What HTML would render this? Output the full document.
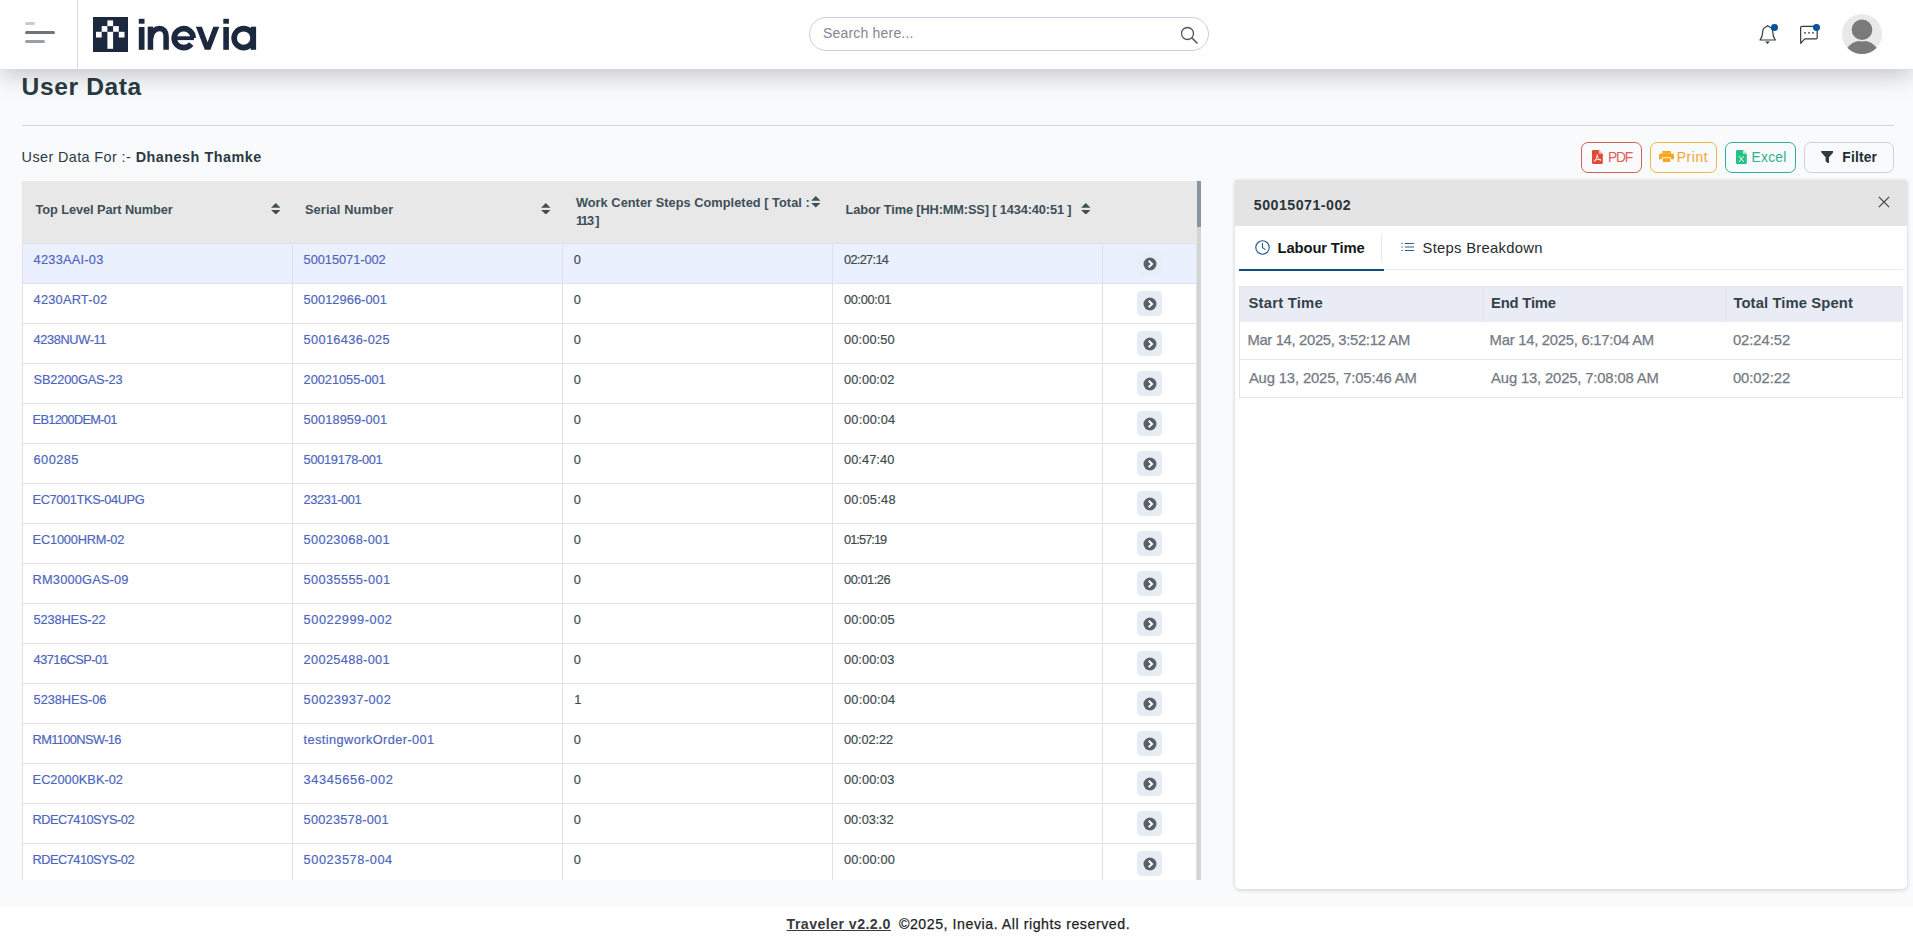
<!DOCTYPE html>
<html>
<head>
<meta charset="utf-8">
<title>User Data</title>
<style>
*{box-sizing:border-box;margin:0;padding:0}
html,body{width:1913px;height:940px;overflow:hidden}
body{font-family:"Liberation Sans",sans-serif;background:#f9fafc;position:relative;color:#3a474b}
.abs{position:absolute}
.t{position:absolute;white-space:nowrap;line-height:1}
#header{position:absolute;left:0;top:0;width:1913px;height:69px;background:#fff;box-shadow:0 6px 24px rgba(0,0,0,.22);z-index:5}
#hsep{position:absolute;left:77px;top:0;width:1px;height:69px;background:#d9d9d9}
.hb{position:absolute;left:25px;height:3px;border-radius:2px}
#search{position:absolute;left:809px;top:17px;width:400px;height:34px;border:1px solid #c9cee6;border-radius:17px;background:#fff}
#hr{position:absolute;left:22px;top:125px;width:1872px;height:1px;background:#cdd6ea}
.btn{position:absolute;top:142px;height:31px;border:1px solid;border-radius:7px;background:transparent}
#tbl{position:absolute;left:22px;top:181px;width:1175px;height:699px;background:#fff;overflow:hidden}
#thead{position:absolute;left:0;top:0;width:1175px;height:62px;background:#e8e8e8}
.row{position:absolute;left:0;width:1175px;height:40px;border-top:1px solid #dfe2ea;background:#fff}
.row.sel{background:#eaf0fe}
.vb{position:absolute;top:62px;width:1px;height:640px;background:#dfe2ea;z-index:2}
.act{position:absolute;left:1115px;top:7px;width:25px;height:25px;border-radius:4.500px;background:#e6ecf3}
.row.sel .act{background:#e8eef8}
#panel{position:absolute;left:1235px;top:180px;width:672px;height:708.500px;background:#fff;border-radius:0 0 5px 5px;box-shadow:0 1px 4px rgba(0,0,0,.18)}
#phead{position:absolute;left:0;top:0;width:672px;height:46px;background:#e4e4e4}
#itbl{position:absolute;left:4px;top:106px;width:664px;height:112px;border:1px solid #e3e6ee;background:#fff}
.ih{position:absolute;top:0;height:34.500px;background:#e9ecf4}
#footer{position:absolute;left:0;top:905.500px;width:1913px;height:35px;background:#fff}
</style>
</head>
<body>

<div id="header">
  <div class="hb" style="top:22px;width:10px;background:#cacbcc"></div>
  <div class="hb" style="top:31px;width:30px;background:#6c757d"></div>
  <div class="hb" style="top:40px;width:20px;background:#9a9fa6"></div>
  <div id="hsep"></div>
  <svg class="abs" style="left:93px;top:17px" width="35" height="35" viewBox="0 0 35 35">
    <rect width="35" height="35" fill="#1c2740"/>
    <g fill="#fff">
      <rect x="14.400" y="3.400" width="5.700" height="5.700"/>
      <rect x="8.700" y="9.100" width="5.700" height="5.700"/>
      <rect x="20.100" y="9.100" width="5.700" height="5.700"/>
      <rect x="3" y="14.800" width="5.700" height="5.700"/>
      <rect x="25.800" y="14.800" width="5.700" height="5.700"/>
      <rect x="14.400" y="14.800" width="5.700" height="17"/>
    </g>
  </svg>
  <svg class="abs" style="left:134px;top:14px" width="128" height="42" viewBox="0 0 128 42">
    <g fill="#1c2740">
      <rect x="4.800" y="13" width="5.700" height="22.800"/><rect x="4.800" y="4.800" width="5.700" height="4.900"/>
      <rect x="13.700" y="12.600" width="5.500" height="23.200"/>
      <polygon points="61.900,12.700 67.900,12.700 73.600,28.300 79.300,12.700 85.300,12.700 76.400,35.800 70.800,35.800"/>
      <rect x="89.300" y="13" width="5.600" height="22.800"/><rect x="89.300" y="4.800" width="5.600" height="4.900"/>
      <rect x="116.700" y="12.700" width="5.400" height="23.100"/>
    </g>
    <g fill="none" stroke="#1c2740">
      <path d="M32.100 35.800V22.300C32.100 17.300 29.300 14.600 25.600 14.600C21.600 14.600 17.500 17.600 16.500 24.500" stroke-width="5.500"/>
      <path d="M59.200 24.100A9.500 9.500 0 1 0 57.200 30" stroke-width="5.600"/>
      <path d="M41 24.200H60" stroke-width="3.800"/>
      <circle cx="109.600" cy="24.100" r="9.500" stroke-width="5.600"/>
    </g>
  </svg>

  <div id="search"></div>
  <div class="t" style="left:823px;top:26px;font-size:14px;letter-spacing:0.19px;color:#85858f;">Search here...</div>
  <svg class="abs" style="left:1180px;top:26px" width="18" height="18" viewBox="0 0 18 18" fill="none" stroke="#555" stroke-width="1.300">
    <circle cx="7.500" cy="7.500" r="6"/><path d="M12 12l5 5" stroke-width="1.600" stroke-linecap="round"/>
  </svg>

  <svg class="abs" style="left:1758px;top:24px" width="20" height="22" viewBox="0 0 20 22" fill="none" stroke="#2f3b3f" stroke-width="1.200">
    <path d="M9.500 1.700L8.200 2.800c-2.300.9-3.600 3-3.600 5.600 0 3.600-1.300 5.900-2.600 7.600h15.400c-1.300-1.700-2.600-4-2.600-7.600 0-2.600-1.300-4.700-3.600-5.600z" stroke-linejoin="round"/>
    <path d="M7.100 17.600h4.800l-2.400 2.300z" fill="#2f3b3f" stroke="none"/>
  </svg>
  <div class="abs" style="left:1771.100px;top:23.900px;width:6.900px;height:6.900px;border-radius:50%;background:#0a53a0"></div>
  <svg class="abs" style="left:1799px;top:25px" width="20" height="20" viewBox="0 0 20 20" fill="none" stroke="#2f3b3f" stroke-width="1.200">
    <path d="M1.600 2.800a1.500 1.500 0 0 1 1.500-1.500h13.600a1.500 1.500 0 0 1 1.500 1.500v9.600a1.500 1.500 0 0 1-1.500 1.500H5.700L1.700 18.300z" stroke-linejoin="round"/>
    <circle cx="6" cy="7.800" r=".9" fill="#2f3b3f" stroke="none"/><circle cx="10" cy="7.800" r=".9" fill="#2f3b3f" stroke="none"/><circle cx="14" cy="7.800" r=".9" fill="#2f3b3f" stroke="none"/>
  </svg>
  <div class="abs" style="left:1813.100px;top:23.900px;width:6.900px;height:6.900px;border-radius:50%;background:#0a53a0"></div>
  <svg class="abs" style="left:1842px;top:14px" width="40" height="40" viewBox="0 0 40 40">
    <defs><clipPath id="av"><circle cx="20" cy="20" r="20"/></clipPath></defs>
    <circle cx="20" cy="20" r="20" fill="#e9e9e9"/>
    <g clip-path="url(#av)" fill="#7a7a7a">
      <ellipse cx="20" cy="41" rx="17" ry="14.200"/>
      <circle cx="20" cy="15.800" r="11.700" fill="#e9e9e9"/>
      <circle cx="20" cy="15.800" r="10.300"/>
    </g>
  </svg>
</div>

<div class="t" style="left:21.6px;top:75px;font-size:24.6px;font-weight:700;letter-spacing:0.61px;color:#2a3b42;">User Data</div>
<div id="hr"></div>
<div class="t" style="left:21.6px;top:150px;font-size:14.4px;letter-spacing:0.4px;color:#2a3b42;">User Data For :-</div>
<div class="t" style="left:135.7px;top:150px;font-size:14.4px;font-weight:700;letter-spacing:0.49px;color:#2a3b42;">Dhanesh Thamke</div>

<div class="btn" style="left:1581px;width:61px;border-color:#cf6257"></div>
<div class="btn" style="left:1650px;width:67px;border-color:#ecb744"></div>
<div class="btn" style="left:1725px;width:71px;border-color:#30b28b"></div>
<div class="btn" style="left:1804px;width:90px;border-color:#cfd0d6"></div>
<div class="t" style="left:1607.9px;top:151px;font-size:13.8px;letter-spacing:-1.13px;color:#dd5e56;">PDF</div>
<div class="t" style="left:1676.7px;top:151px;font-size:13.8px;letter-spacing:0.62px;color:#f5a42a;">Print</div>
<div class="t" style="left:1751.5px;top:151px;font-size:13.8px;letter-spacing:0.28px;color:#2cb38a;">Excel</div>
<div class="t" style="left:1842.3px;top:151px;font-size:13.8px;font-weight:700;letter-spacing:0.19px;color:#222d31;">Filter</div>
<svg class="abs" style="left:1592px;top:150px" width="11" height="14" viewBox="0 0 11 14"><path d="M1.300 0H6.800L10.800 4V12.700A1.300 1.300 0 0 1 9.500 14H1.300A1.300 1.300 0 0 1 0 12.700V1.300A1.300 1.300 0 0 1 1.300 0Z" fill="#e04b36"/><path d="M6.800 0V4H10.800" fill="#f4b3a8"/><path d="M5.200 5.200C5.200 7.500 3.800 10 2.400 11.400M5.200 5.200C5.400 7.800 7 9.600 8.700 10M2.800 10.300C4.800 9.300 6.800 9.200 8.700 10" fill="none" stroke="#fff" stroke-width=".9" stroke-linecap="round"/></svg>
<svg class="abs" style="left:1659px;top:151px" width="15" height="11" viewBox="0 0 15 11"><path d="M3.300 0H11.700V2.600H3.300Z" fill="#f9a61a"/><path d="M1.800 2.600H13.200A1.800 1.800 0 0 1 15 4.400V8.300H12V6.300H3V8.300H0V4.400A1.800 1.800 0 0 1 1.800 2.600Z" fill="#f9a61a"/><path d="M3.800 7.200H11.200V11H3.800Z" fill="#f9a61a"/></svg>
<svg class="abs" style="left:1736px;top:150px" width="11" height="14" viewBox="0 0 11 14"><path d="M1.300 0H6.800L10.800 4V12.700A1.300 1.300 0 0 1 9.500 14H1.300A1.300 1.300 0 0 1 0 12.700V1.300A1.300 1.300 0 0 1 1.300 0Z" fill="#25c183"/><path d="M6.800 0V4H10.800" fill="#a9e6cd"/><path d="M3.300 6.500L7.500 11.600M7.500 6.500L3.300 11.600" fill="none" stroke="#fff" stroke-width="1" stroke-linecap="round"/></svg>
<svg class="abs" style="left:1820.500px;top:150.800px" width="12.600" height="12.200" viewBox="0 0 12.600 12.200"><path d="M.7 0H11.900C12.500 0 12.800.7 12.400 1.200L8 6.300V11.400C8 12 7.300 12.400 6.800 12L4.900 10.500C4.700 10.300 4.600 10.100 4.600 9.800V6.300L.2 1.200C-.2.700.1 0 .7 0Z" fill="#2f3b3f"/></svg>

<div id="tbl">
  <div id="thead">
    <div class="t" style="left:13.5px;top:23px;font-size:12.8px;font-weight:700;letter-spacing:-0.09px;color:#3e4f58;">Top Level Part Number</div>
    <svg class="abs" style="left:248.8px;top:21.900000000000006px" width="9.6" height="11.6" viewBox="0 0 9.6 11.6"><path d="M4.800 0L9.500 4.700H.1z M4.800 11.600L9.500 6.900H.1z" fill="#3e4f58"/></svg>
    <div class="t" style="left:282.9px;top:23px;font-size:12.8px;font-weight:700;letter-spacing:0.13px;color:#3e4f58;">Serial Number</div>
    <svg class="abs" style="left:519px;top:21.900000000000006px" width="9.6" height="11.6" viewBox="0 0 9.6 11.6"><path d="M4.800 0L9.500 4.700H.1z M4.800 11.600L9.500 6.900H.1z" fill="#3e4f58"/></svg>
    <div class="t" style="left:553.9px;top:16px;font-size:12.8px;font-weight:700;letter-spacing:0.03px;color:#3e4f58;">Work Center Steps Completed [ Total :</div>
    <div class="t" style="left:553.9px;top:34px;font-size:12.8px;font-weight:700;letter-spacing:-1.2px;color:#3e4f58;">113 ]</div>
    <svg class="abs" style="left:789.3px;top:15.099999999999994px" width="9.6" height="11.6" viewBox="0 0 9.6 11.6"><path d="M4.800 0L9.500 4.700H.1z M4.800 11.600L9.500 6.900H.1z" fill="#3e4f58"/></svg>
    <div class="t" style="left:823.6px;top:23px;font-size:12.8px;font-weight:700;letter-spacing:-0.14px;color:#3e4f58;">Labor Time [HH:MM:SS] [ 1434:40:51 ]</div>
    <svg class="abs" style="left:1059.3px;top:21.900000000000006px" width="9.6" height="11.6" viewBox="0 0 9.6 11.6"><path d="M4.800 0L9.500 4.700H.1z M4.800 11.600L9.500 6.900H.1z" fill="#3e4f58"/></svg>
  </div>
  <div class="vb" style="left:0px"></div>
  <div class="vb" style="left:270px"></div>
  <div class="vb" style="left:540px"></div>
  <div class="vb" style="left:810px"></div>
  <div class="vb" style="left:1080px"></div>
  <div class="vb" style="left:1174px"></div>
  <div class="row sel" style="top:62px">
    <div class="t" style="left:11.6px;top:10px;font-size:12.8px;letter-spacing:0.24px;color:#4d66bd;-webkit-text-stroke:.18px #4d66bd;">4233AAI-03</div><div class="t" style="left:281.6px;top:10px;font-size:12.8px;letter-spacing:-0.04px;color:#4d66bd;-webkit-text-stroke:.18px #4d66bd;">50015071-002</div><div class="t" style="left:551.7px;top:10px;font-size:12.8px;color:#3d4a4e;-webkit-text-stroke:.18px #3d4a4e;">0</div><div class="t" style="left:822px;top:10px;font-size:12.8px;letter-spacing:-0.7px;color:#3d4a4e;-webkit-text-stroke:.18px #3d4a4e;">02:27:14</div>
    <div class="act"><svg class="abs" style="left:5.800px;top:5.500px" width="14" height="14" viewBox="0 0 14 14"><circle cx="7" cy="7" r="6.500" fill="#596068"/><path d="M5.700 3.700L9.100 7L5.700 10.300" fill="none" stroke="#fff" stroke-width="1.900"/></svg></div>
  </div>
  <div class="row" style="top:102px">
    <div class="t" style="left:11.6px;top:10px;font-size:12.8px;letter-spacing:0.21px;color:#4d66bd;-webkit-text-stroke:.18px #4d66bd;">4230ART-02</div><div class="t" style="left:281.6px;top:10px;font-size:12.8px;letter-spacing:0.07px;color:#4d66bd;-webkit-text-stroke:.18px #4d66bd;">50012966-001</div><div class="t" style="left:551.7px;top:10px;font-size:12.8px;color:#3d4a4e;-webkit-text-stroke:.18px #3d4a4e;">0</div><div class="t" style="left:822px;top:10px;font-size:12.8px;letter-spacing:-0.34px;color:#3d4a4e;-webkit-text-stroke:.18px #3d4a4e;">00:00:01</div>
    <div class="act"><svg class="abs" style="left:5.800px;top:5.500px" width="14" height="14" viewBox="0 0 14 14"><circle cx="7" cy="7" r="6.500" fill="#596068"/><path d="M5.700 3.700L9.100 7L5.700 10.300" fill="none" stroke="#fff" stroke-width="1.900"/></svg></div>
  </div>
  <div class="row" style="top:142px">
    <div class="t" style="left:11.6px;top:10px;font-size:12.8px;letter-spacing:-0.39px;color:#4d66bd;-webkit-text-stroke:.18px #4d66bd;">4238NUW-11</div><div class="t" style="left:281.6px;top:10px;font-size:12.8px;letter-spacing:0.32px;color:#4d66bd;-webkit-text-stroke:.18px #4d66bd;">50016436-025</div><div class="t" style="left:551.7px;top:10px;font-size:12.8px;color:#3d4a4e;-webkit-text-stroke:.18px #3d4a4e;">0</div><div class="t" style="left:822px;top:10px;font-size:12.8px;letter-spacing:0.13px;color:#3d4a4e;-webkit-text-stroke:.18px #3d4a4e;">00:00:50</div>
    <div class="act"><svg class="abs" style="left:5.800px;top:5.500px" width="14" height="14" viewBox="0 0 14 14"><circle cx="7" cy="7" r="6.500" fill="#596068"/><path d="M5.700 3.700L9.100 7L5.700 10.300" fill="none" stroke="#fff" stroke-width="1.900"/></svg></div>
  </div>
  <div class="row" style="top:182px">
    <div class="t" style="left:11.6px;top:10px;font-size:12.8px;letter-spacing:-0.19px;color:#4d66bd;-webkit-text-stroke:.18px #4d66bd;">SB2200GAS-23</div><div class="t" style="left:281.6px;top:10px;font-size:12.8px;letter-spacing:-0.04px;color:#4d66bd;-webkit-text-stroke:.18px #4d66bd;">20021055-001</div><div class="t" style="left:551.7px;top:10px;font-size:12.8px;color:#3d4a4e;-webkit-text-stroke:.18px #3d4a4e;">0</div><div class="t" style="left:822px;top:10px;font-size:12.8px;letter-spacing:0.07px;color:#3d4a4e;-webkit-text-stroke:.18px #3d4a4e;">00:00:02</div>
    <div class="act"><svg class="abs" style="left:5.800px;top:5.500px" width="14" height="14" viewBox="0 0 14 14"><circle cx="7" cy="7" r="6.500" fill="#596068"/><path d="M5.700 3.700L9.100 7L5.700 10.300" fill="none" stroke="#fff" stroke-width="1.900"/></svg></div>
  </div>
  <div class="row" style="top:222px">
    <div class="t" style="left:10.6px;top:10px;font-size:12.8px;letter-spacing:-0.7px;color:#4d66bd;-webkit-text-stroke:.18px #4d66bd;">EB1200DEM-01</div><div class="t" style="left:281.6px;top:10px;font-size:12.8px;letter-spacing:0.09px;color:#4d66bd;-webkit-text-stroke:.18px #4d66bd;">50018959-001</div><div class="t" style="left:551.7px;top:10px;font-size:12.8px;color:#3d4a4e;-webkit-text-stroke:.18px #3d4a4e;">0</div><div class="t" style="left:822px;top:10px;font-size:12.8px;letter-spacing:0.2px;color:#3d4a4e;-webkit-text-stroke:.18px #3d4a4e;">00:00:04</div>
    <div class="act"><svg class="abs" style="left:5.800px;top:5.500px" width="14" height="14" viewBox="0 0 14 14"><circle cx="7" cy="7" r="6.500" fill="#596068"/><path d="M5.700 3.700L9.100 7L5.700 10.300" fill="none" stroke="#fff" stroke-width="1.900"/></svg></div>
  </div>
  <div class="row" style="top:262px">
    <div class="t" style="left:11.6px;top:10px;font-size:12.8px;letter-spacing:0.4px;color:#4d66bd;-webkit-text-stroke:.18px #4d66bd;">600285</div><div class="t" style="left:281.6px;top:10px;font-size:12.8px;letter-spacing:-0.31px;color:#4d66bd;-webkit-text-stroke:.18px #4d66bd;">50019178-001</div><div class="t" style="left:551.7px;top:10px;font-size:12.8px;color:#3d4a4e;-webkit-text-stroke:.18px #3d4a4e;">0</div><div class="t" style="left:822px;top:10px;font-size:12.8px;letter-spacing:0.07px;color:#3d4a4e;-webkit-text-stroke:.18px #3d4a4e;">00:47:40</div>
    <div class="act"><svg class="abs" style="left:5.800px;top:5.500px" width="14" height="14" viewBox="0 0 14 14"><circle cx="7" cy="7" r="6.500" fill="#596068"/><path d="M5.700 3.700L9.100 7L5.700 10.300" fill="none" stroke="#fff" stroke-width="1.900"/></svg></div>
  </div>
  <div class="row" style="top:302px">
    <div class="t" style="left:10.6px;top:10px;font-size:12.8px;letter-spacing:-0.38px;color:#4d66bd;-webkit-text-stroke:.18px #4d66bd;">EC7001TKS-04UPG</div><div class="t" style="left:281.6px;top:10px;font-size:12.8px;letter-spacing:-0.4px;color:#4d66bd;-webkit-text-stroke:.18px #4d66bd;">23231-001</div><div class="t" style="left:551.7px;top:10px;font-size:12.8px;color:#3d4a4e;-webkit-text-stroke:.18px #3d4a4e;">0</div><div class="t" style="left:822px;top:10px;font-size:12.8px;letter-spacing:0.24px;color:#3d4a4e;-webkit-text-stroke:.18px #3d4a4e;">00:05:48</div>
    <div class="act"><svg class="abs" style="left:5.800px;top:5.500px" width="14" height="14" viewBox="0 0 14 14"><circle cx="7" cy="7" r="6.500" fill="#596068"/><path d="M5.700 3.700L9.100 7L5.700 10.300" fill="none" stroke="#fff" stroke-width="1.900"/></svg></div>
  </div>
  <div class="row" style="top:342px">
    <div class="t" style="left:10.6px;top:10px;font-size:12.8px;letter-spacing:-0.2px;color:#4d66bd;-webkit-text-stroke:.18px #4d66bd;">EC1000HRM-02</div><div class="t" style="left:281.6px;top:10px;font-size:12.8px;letter-spacing:0.32px;color:#4d66bd;-webkit-text-stroke:.18px #4d66bd;">50023068-001</div><div class="t" style="left:551.7px;top:10px;font-size:12.8px;color:#3d4a4e;-webkit-text-stroke:.18px #3d4a4e;">0</div><div class="t" style="left:822px;top:10px;font-size:12.8px;letter-spacing:-0.94px;color:#3d4a4e;-webkit-text-stroke:.18px #3d4a4e;">01:57:19</div>
    <div class="act"><svg class="abs" style="left:5.800px;top:5.500px" width="14" height="14" viewBox="0 0 14 14"><circle cx="7" cy="7" r="6.500" fill="#596068"/><path d="M5.700 3.700L9.100 7L5.700 10.300" fill="none" stroke="#fff" stroke-width="1.900"/></svg></div>
  </div>
  <div class="row" style="top:382px">
    <div class="t" style="left:10.6px;top:10px;font-size:12.8px;letter-spacing:0.18px;color:#4d66bd;-webkit-text-stroke:.18px #4d66bd;">RM3000GAS-09</div><div class="t" style="left:281.6px;top:10px;font-size:12.8px;letter-spacing:0.35px;color:#4d66bd;-webkit-text-stroke:.18px #4d66bd;">50035555-001</div><div class="t" style="left:551.7px;top:10px;font-size:12.8px;color:#3d4a4e;-webkit-text-stroke:.18px #3d4a4e;">0</div><div class="t" style="left:822px;top:10px;font-size:12.8px;letter-spacing:-0.46px;color:#3d4a4e;-webkit-text-stroke:.18px #3d4a4e;">00:01:26</div>
    <div class="act"><svg class="abs" style="left:5.800px;top:5.500px" width="14" height="14" viewBox="0 0 14 14"><circle cx="7" cy="7" r="6.500" fill="#596068"/><path d="M5.700 3.700L9.100 7L5.700 10.300" fill="none" stroke="#fff" stroke-width="1.900"/></svg></div>
  </div>
  <div class="row" style="top:422px">
    <div class="t" style="left:11.6px;top:10px;font-size:12.8px;letter-spacing:-0.15px;color:#4d66bd;-webkit-text-stroke:.18px #4d66bd;">5238HES-22</div><div class="t" style="left:281.6px;top:10px;font-size:12.8px;letter-spacing:0.53px;color:#4d66bd;-webkit-text-stroke:.18px #4d66bd;">50022999-002</div><div class="t" style="left:551.7px;top:10px;font-size:12.8px;color:#3d4a4e;-webkit-text-stroke:.18px #3d4a4e;">0</div><div class="t" style="left:822px;top:10px;font-size:12.8px;letter-spacing:0.13px;color:#3d4a4e;-webkit-text-stroke:.18px #3d4a4e;">00:00:05</div>
    <div class="act"><svg class="abs" style="left:5.800px;top:5.500px" width="14" height="14" viewBox="0 0 14 14"><circle cx="7" cy="7" r="6.500" fill="#596068"/><path d="M5.700 3.700L9.100 7L5.700 10.300" fill="none" stroke="#fff" stroke-width="1.900"/></svg></div>
  </div>
  <div class="row" style="top:462px">
    <div class="t" style="left:11.6px;top:10px;font-size:12.8px;letter-spacing:-0.54px;color:#4d66bd;-webkit-text-stroke:.18px #4d66bd;">43716CSP-01</div><div class="t" style="left:281.6px;top:10px;font-size:12.8px;letter-spacing:0.32px;color:#4d66bd;-webkit-text-stroke:.18px #4d66bd;">20025488-001</div><div class="t" style="left:551.7px;top:10px;font-size:12.8px;color:#3d4a4e;-webkit-text-stroke:.18px #3d4a4e;">0</div><div class="t" style="left:822px;top:10px;font-size:12.8px;letter-spacing:0.07px;color:#3d4a4e;-webkit-text-stroke:.18px #3d4a4e;">00:00:03</div>
    <div class="act"><svg class="abs" style="left:5.800px;top:5.500px" width="14" height="14" viewBox="0 0 14 14"><circle cx="7" cy="7" r="6.500" fill="#596068"/><path d="M5.700 3.700L9.100 7L5.700 10.300" fill="none" stroke="#fff" stroke-width="1.900"/></svg></div>
  </div>
  <div class="row" style="top:502px">
    <div class="t" style="left:11.6px;top:10px;font-size:12.8px;letter-spacing:-0.05px;color:#4d66bd;-webkit-text-stroke:.18px #4d66bd;">5238HES-06</div><div class="t" style="left:281.6px;top:10px;font-size:12.8px;letter-spacing:0.42px;color:#4d66bd;-webkit-text-stroke:.18px #4d66bd;">50023937-002</div><div class="t" style="left:552.3px;top:10px;font-size:12.8px;color:#3d4a4e;-webkit-text-stroke:.18px #3d4a4e;">1</div><div class="t" style="left:822px;top:10px;font-size:12.8px;letter-spacing:0.2px;color:#3d4a4e;-webkit-text-stroke:.18px #3d4a4e;">00:00:04</div>
    <div class="act"><svg class="abs" style="left:5.800px;top:5.500px" width="14" height="14" viewBox="0 0 14 14"><circle cx="7" cy="7" r="6.500" fill="#596068"/><path d="M5.700 3.700L9.100 7L5.700 10.300" fill="none" stroke="#fff" stroke-width="1.900"/></svg></div>
  </div>
  <div class="row" style="top:542px">
    <div class="t" style="left:10.6px;top:10px;font-size:12.8px;letter-spacing:-0.61px;color:#4d66bd;-webkit-text-stroke:.18px #4d66bd;">RM1100NSW-16</div><div class="t" style="left:281.6px;top:10px;font-size:12.8px;letter-spacing:0.4px;color:#4d66bd;-webkit-text-stroke:.18px #4d66bd;">testingworkOrder-001</div><div class="t" style="left:551.7px;top:10px;font-size:12.8px;color:#3d4a4e;-webkit-text-stroke:.18px #3d4a4e;">0</div><div class="t" style="left:822px;top:10px;font-size:12.8px;letter-spacing:-0.11px;color:#3d4a4e;-webkit-text-stroke:.18px #3d4a4e;">00:02:22</div>
    <div class="act"><svg class="abs" style="left:5.800px;top:5.500px" width="14" height="14" viewBox="0 0 14 14"><circle cx="7" cy="7" r="6.500" fill="#596068"/><path d="M5.700 3.700L9.100 7L5.700 10.300" fill="none" stroke="#fff" stroke-width="1.900"/></svg></div>
  </div>
  <div class="row" style="top:582px">
    <div class="t" style="left:10.6px;top:10px;font-size:12.8px;color:#4d66bd;-webkit-text-stroke:.18px #4d66bd;">EC2000KBK-02</div><div class="t" style="left:281.6px;top:10px;font-size:12.8px;letter-spacing:0.62px;color:#4d66bd;-webkit-text-stroke:.18px #4d66bd;">34345656-002</div><div class="t" style="left:551.7px;top:10px;font-size:12.8px;color:#3d4a4e;-webkit-text-stroke:.18px #3d4a4e;">0</div><div class="t" style="left:822px;top:10px;font-size:12.8px;letter-spacing:0.07px;color:#3d4a4e;-webkit-text-stroke:.18px #3d4a4e;">00:00:03</div>
    <div class="act"><svg class="abs" style="left:5.800px;top:5.500px" width="14" height="14" viewBox="0 0 14 14"><circle cx="7" cy="7" r="6.500" fill="#596068"/><path d="M5.700 3.700L9.100 7L5.700 10.300" fill="none" stroke="#fff" stroke-width="1.900"/></svg></div>
  </div>
  <div class="row" style="top:622px">
    <div class="t" style="left:10.6px;top:10px;font-size:12.8px;letter-spacing:-0.53px;color:#4d66bd;-webkit-text-stroke:.18px #4d66bd;">RDEC7410SYS-02</div><div class="t" style="left:281.6px;top:10px;font-size:12.8px;letter-spacing:0.22px;color:#4d66bd;-webkit-text-stroke:.18px #4d66bd;">50023578-001</div><div class="t" style="left:551.7px;top:10px;font-size:12.8px;color:#3d4a4e;-webkit-text-stroke:.18px #3d4a4e;">0</div><div class="t" style="left:822px;top:10px;font-size:12.8px;letter-spacing:-0.04px;color:#3d4a4e;-webkit-text-stroke:.18px #3d4a4e;">00:03:32</div>
    <div class="act"><svg class="abs" style="left:5.800px;top:5.500px" width="14" height="14" viewBox="0 0 14 14"><circle cx="7" cy="7" r="6.500" fill="#596068"/><path d="M5.700 3.700L9.100 7L5.700 10.300" fill="none" stroke="#fff" stroke-width="1.900"/></svg></div>
  </div>
  <div class="row" style="top:662px">
    <div class="t" style="left:10.6px;top:10px;font-size:12.8px;letter-spacing:-0.53px;color:#4d66bd;-webkit-text-stroke:.18px #4d66bd;">RDEC7410SYS-02</div><div class="t" style="left:281.6px;top:10px;font-size:12.8px;letter-spacing:0.55px;color:#4d66bd;-webkit-text-stroke:.18px #4d66bd;">50023578-004</div><div class="t" style="left:551.7px;top:10px;font-size:12.8px;color:#3d4a4e;-webkit-text-stroke:.18px #3d4a4e;">0</div><div class="t" style="left:822px;top:10px;font-size:12.8px;letter-spacing:0.14px;color:#3d4a4e;-webkit-text-stroke:.18px #3d4a4e;">00:00:00</div>
    <div class="act"><svg class="abs" style="left:5.800px;top:5.500px" width="14" height="14" viewBox="0 0 14 14"><circle cx="7" cy="7" r="6.500" fill="#596068"/><path d="M5.700 3.700L9.100 7L5.700 10.300" fill="none" stroke="#fff" stroke-width="1.900"/></svg></div>
  </div>
</div>
<div class="abs" style="left:1197px;top:181px;width:4px;height:699px;background:#d4d4d4"></div>
<div class="abs" style="left:1197px;top:181px;width:4px;height:46px;background:#8b949c"></div>

<div id="panel">
  <div id="phead"></div>
  <div class="t" style="left:18.8px;top:18px;font-size:14.2px;font-weight:700;letter-spacing:0.49px;color:#28353b;">50015071-002</div>
  <svg class="abs" style="left:643px;top:16px" width="12" height="12" viewBox="0 0 12 12" fill="none" stroke="#3a4347" stroke-width="1.200"><path d="M.8.8l10.400 10.400M11.200.8L.8 11.200"/></svg>
  <div class="abs" style="left:4px;top:89px;width:664px;height:1px;background:#e6e9f1"></div>
  <div class="abs" style="left:4px;top:88.500px;width:144.500px;height:2.300px;background:#0f4c81"></div>
  <div class="abs" style="left:146px;top:54px;width:1px;height:28px;background:#e8eaf0"></div>
  <svg class="abs" style="left:19.500px;top:60.400px" width="15" height="15" viewBox="0 0 15 15" fill="none" stroke="#1d5a8f" stroke-width="1.100"><circle cx="7.500" cy="7.500" r="6.700"/><path d="M7.500 3.500v4.300l2.700 1.600" stroke-linecap="round"/></svg>
  <div class="t" style="left:42.6px;top:61px;font-size:14.8px;font-weight:700;letter-spacing:-0.14px;color:#15191b;">Labour Time</div>
  <svg class="abs" style="left:165.500px;top:62px" width="14" height="10" viewBox="0 0 14 10" fill="none" stroke="#2d5f8f" stroke-width="1.100"><path d="M3.800 1.500h9.300M3.800 5h9.300M3.800 8.500h9.300"/><path d="M.4 1.500h1.400M.4 5h1.400M.4 8.500h1.400"/></svg>
  <div class="t" style="left:187.5px;top:61px;font-size:14.8px;letter-spacing:0.29px;color:#262b2d;">Steps Breakdown</div>
  <div id="itbl">
    <div class="ih" style="left:0;width:662px"></div>
    <div class="abs" style="left:242.500px;top:0;width:1px;height:34.500px;background:#e1e4ee"></div>
    <div class="abs" style="left:484.500px;top:0;width:1px;height:34.500px;background:#e1e4ee"></div>
    <div class="abs" style="left:0;top:72px;width:662px;height:1px;background:#e3e6ee"></div>
    <div class="t" style="left:8.4px;top:9px;font-size:14.8px;font-weight:700;letter-spacing:0.24px;color:#33424a;">Start Time</div>
    <div class="t" style="left:251.1px;top:9px;font-size:14.8px;font-weight:700;letter-spacing:-0.2px;color:#33424a;">End Time</div>
    <div class="t" style="left:493.4px;top:9px;font-size:14.8px;font-weight:700;letter-spacing:0.11px;color:#33424a;">Total Time Spent</div>
    <div class="t" style="left:7.4px;top:46px;font-size:14.8px;letter-spacing:-0.32px;color:#747a84;-webkit-text-stroke:.25px #747a84;">Mar 14, 2025, 3:52:12 AM</div>
    <div class="t" style="left:249.6px;top:46px;font-size:14.8px;letter-spacing:-0.25px;color:#747a84;-webkit-text-stroke:.25px #747a84;">Mar 14, 2025, 6:17:04 AM</div>
    <div class="t" style="left:492.9px;top:46px;font-size:14.8px;letter-spacing:-0.04px;color:#747a84;-webkit-text-stroke:.25px #747a84;">02:24:52</div>
    <div class="t" style="left:8.9px;top:84px;font-size:14.8px;letter-spacing:-0.14px;color:#747a84;-webkit-text-stroke:.25px #747a84;">Aug 13, 2025, 7:05:46 AM</div>
    <div class="t" style="left:251.1px;top:84px;font-size:14.8px;letter-spacing:-0.15px;color:#747a84;-webkit-text-stroke:.25px #747a84;">Aug 13, 2025, 7:08:08 AM</div>
    <div class="t" style="left:492.9px;top:84px;font-size:14.8px;letter-spacing:-0.04px;color:#747a84;-webkit-text-stroke:.25px #747a84;">00:02:22</div>
  </div>
</div>

<div id="footer">
  <div class="t" style="left:786.6px;top:11.5px;font-size:14.2px;font-weight:700;letter-spacing:0.43px;color:#353b40;text-decoration:underline;text-underline-offset:.5px;">Traveler v2.2.0</div>
  <div class="t" style="left:898.9px;top:11.5px;font-size:14.2px;letter-spacing:0.54px;color:#1b1f22;-webkit-text-stroke:.25px #1b1f22;">©2025, Inevia. All rights reserved.</div>
</div>

</body>
</html>
